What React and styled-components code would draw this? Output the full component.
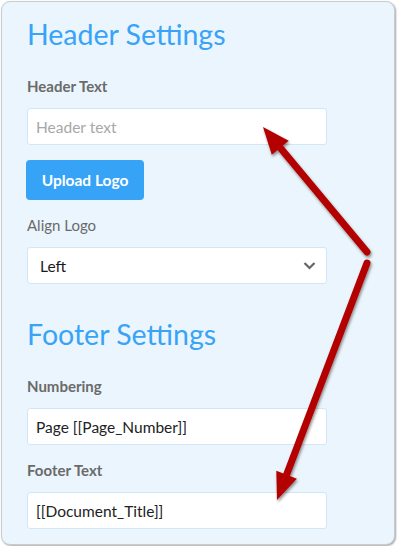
import React from "react";
import styled, { createGlobalStyle } from "styled-components";

const Global = createGlobalStyle`
  html, body { margin: 0; padding: 0; background: #ffffff; }
  body { font-family: "Lato", "Liberation Sans", sans-serif; }
`;

const Stage = styled.div`
  position: relative;
  width: 398px;
  height: 546px;
  padding: 1px 0 0 1px;
  box-sizing: border-box;
`;

const Card = styled.div`
  width: 394px;
  height: 544px;
  box-sizing: border-box;
  background: #eaf5fd;
  border: 1px solid #c9cdd0;
  border-radius: 9px;
  box-shadow: 1px 1px 2px rgba(0, 0, 0, 0.35);
  padding: 15px 70px 14px 25px;
  display: flex;
  flex-direction: column;
`;

const Heading = styled.h2`
  margin: ${(p) => (p.$first ? "0" : "33px")} 0 26px 0;
  font-size: 28.5px;
  line-height: 34px;
  font-weight: 400;
  color: #38a3f7;
  white-space: nowrap;
`;

const Field = styled.div`
  display: flex;
  flex-direction: column;
  gap: 13px;
  margin-top: ${(p) => (p.$first ? "0" : "16px")};
`;

const Label = styled.label`
  font-size: 15px;
  line-height: 18px;
  font-weight: ${(p) => (p.$light ? 400 : 700)};
  color: #6a6a6a;
`;

const Input = styled.input`
  width: 300px;
  height: 37px;
  box-sizing: border-box;
  border: 1px solid #d3e6f6;
  border-radius: 3px;
  background: #ffffff;
  padding: 0 8px;
  font-family: inherit;
  font-size: 15.5px;
  color: #222;
  outline: none;
  &::placeholder { color: #a8a8a8; }
`;

const SelectBox = styled.div`
  width: 300px;
  height: 37px;
  box-sizing: border-box;
  border: 1px solid #d3e6f6;
  border-radius: 3px;
  background: #ffffff;
  padding: 0 10px 0 12px;
  display: flex;
  align-items: center;
  justify-content: space-between;
  font-size: 15.5px;
  color: #1a1a1a;
`;

const Button = styled.button`
  align-self: flex-start;
  width: 118px;
  height: 40px;
  margin: 15px 0 0 -1px;
  border: none;
  border-radius: 4px;
  background: #36a3f7;
  color: #ffffff;
  font-family: inherit;
  font-size: 15.5px;
  font-weight: 700;
  cursor: pointer;
`;

const Overlay = styled.svg`
  position: absolute;
  left: 0;
  top: 0;
  pointer-events: none;
`;

function Chevron() {
  return (
    <svg width="13" height="9" viewBox="0 0 13 9">
      <path d="M1.5 2 L6.5 7 L11.5 2" fill="none" stroke="#666" strokeWidth="2.2" />
    </svg>
  );
}

function Arrow({ x1, y1, x2, y2 }) {
  const dx = x2 - x1;
  const dy = y2 - y1;
  const len = Math.hypot(dx, dy);
  const ux = dx / len;
  const uy = dy / len;
  const head = 27;
  const half = 11;
  const bx = x2 - ux * head;
  const by = y2 - uy * head;
  const px = -uy;
  const py = ux;
  const pts = `${x2},${y2} ${bx + px * half},${by + py * half} ${bx - px * half},${by - py * half}`;
  return (
    <g filter="url(#shadow)">
      <line x1={x1} y1={y1} x2={bx + ux * 3} y2={by + uy * 3} stroke="#b30000" strokeWidth="7" strokeLinecap="round" />
      <polygon points={pts} fill="#b30000" />
    </g>
  );
}

export default function App() {
  return (
    <>
      <Global />
      <Stage>
        <Card>
          <Heading $first>Header Settings</Heading>
          <Field $first>
            <Label>Header Text</Label>
            <Input placeholder="Header text" />
          </Field>
          <Button>Upload Logo</Button>
          <Field>
            <Label $light>Align Logo</Label>
            <SelectBox>
              <span>Left</span>
              <Chevron />
            </SelectBox>
          </Field>
          <Heading>Footer Settings</Heading>
          <Field $first>
            <Label>Numbering</Label>
            <Input defaultValue="Page [[Page_Number]]" />
          </Field>
          <Field>
            <Label>Footer Text</Label>
            <Input defaultValue="[[Document_Title]]" />
          </Field>
        </Card>
        <Overlay width="398" height="546" viewBox="0 0 398 546">
          <defs>
            <filter id="shadow" x="-20%" y="-20%" width="140%" height="140%">
              <feDropShadow dx="1" dy="2" stdDeviation="1.5" floodColor="#000" floodOpacity="0.45" />
            </filter>
          </defs>
          <Arrow x1={367} y1={252} x2={263} y2={127} />
          <Arrow x1={367} y1={263} x2={277} y2={500} />
        </Overlay>
      </Stage>
    </>
  );
}
